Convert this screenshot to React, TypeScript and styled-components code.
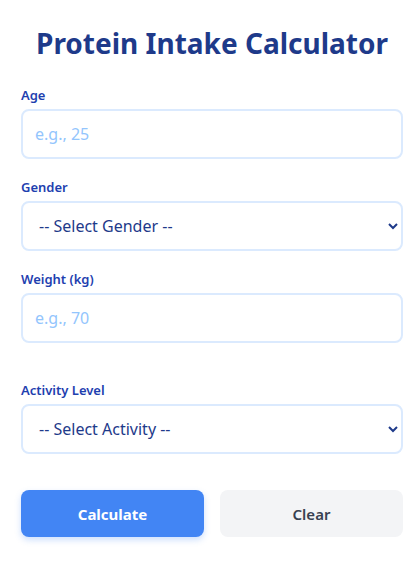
import React, { useState } from "react";
import styled, { createGlobalStyle } from "styled-components";

const Global = createGlobalStyle`
  * { box-sizing: border-box; }
  body { margin: 0; background: #ffffff; font-family: "Noto Sans", "Open Sans", sans-serif; }
`;

const Container = styled.div`
  padding: 24px 17px 24px 21px;
  width: 420px;
`;

const Title = styled.h1`
  margin: 0 0 24px;
  text-align: center;
  font-size: 28px;
  line-height: 38px;
  font-weight: 700;
  color: #1e3a8a;
`;

const Field = styled.div<{ $extra?: number }>`
  display: flex;
  flex-direction: column;
  margin-bottom: ${(p) => 19 + (p.$extra ?? 0)}px;
`;

const Label = styled.label`
  font-size: 13px;
  line-height: 18px;
  font-weight: 600;
  color: #1e40af;
  margin-bottom: 5px;
`;

const Input = styled.input`
  height: 50px;
  width: 100%;
  border: 2px solid #dbeafe;
  border-radius: 8px;
  padding: 0 12px;
  font-size: 16px;
  font-family: inherit;
  color: #1e3a8a;
  outline: none;
  &::placeholder { color: #93c5fd; }
`;

const Select = styled.select`
  height: 50px;
  width: 100%;
  border: 2px solid #dbeafe;
  border-radius: 8px;
  padding: 0 12px;
  font-size: 16px;
  font-family: inherit;
  color: #1e3a8a;
  background: #ffffff;
  outline: none;
`;

const Buttons = styled.div`
  display: grid;
  grid-template-columns: 1fr 1fr;
  gap: 16px;
  margin-top: 36px;
`;

const Button = styled.button<{ $primary?: boolean }>`
  height: 47px;
  border: none;
  border-radius: 8px;
  font-family: inherit;
  font-size: 15px;
  font-weight: ${(p) => (p.$primary ? 700 : 600)};
  background: ${(p) => (p.$primary ? "#4285f4" : "#f3f4f6")};
  color: ${(p) => (p.$primary ? "#ffffff" : "#374151")};
  box-shadow: ${(p) => (p.$primary ? "0 3px 6px rgba(59,130,246,0.25)" : "none")};
  cursor: pointer;
`;

export default function App() {
  const [age, setAge] = useState("");
  const [gender, setGender] = useState("");
  const [weight, setWeight] = useState("");
  const [activity, setActivity] = useState("");
  return (
    <Container>
      <Global />
      <Title>Protein Intake Calculator</Title>
      <Field>
        <Label>Age</Label>
        <Input placeholder="e.g., 25" value={age} onChange={(e) => setAge(e.target.value)} />
      </Field>
      <Field>
        <Label>Gender</Label>
        <Select value={gender} onChange={(e) => setGender(e.target.value)}>
          <option value="">-- Select Gender --</option>
          <option value="male">Male</option>
          <option value="female">Female</option>
        </Select>
      </Field>
      <Field $extra={19}>
        <Label>Weight (kg)</Label>
        <Input placeholder="e.g., 70" value={weight} onChange={(e) => setWeight(e.target.value)} />
      </Field>
      <Field>
        <Label>Activity Level</Label>
        <Select value={activity} onChange={(e) => setActivity(e.target.value)}>
          <option value="">-- Select Activity --</option>
          <option value="sedentary">Sedentary</option>
          <option value="moderate">Moderate</option>
          <option value="active">Active</option>
        </Select>
      </Field>
      <Buttons>
        <Button $primary>Calculate</Button>
        <Button onClick={() => { setAge(""); setGender(""); setWeight(""); setActivity(""); }}>Clear</Button>
      </Buttons>
    </Container>
  );
}
